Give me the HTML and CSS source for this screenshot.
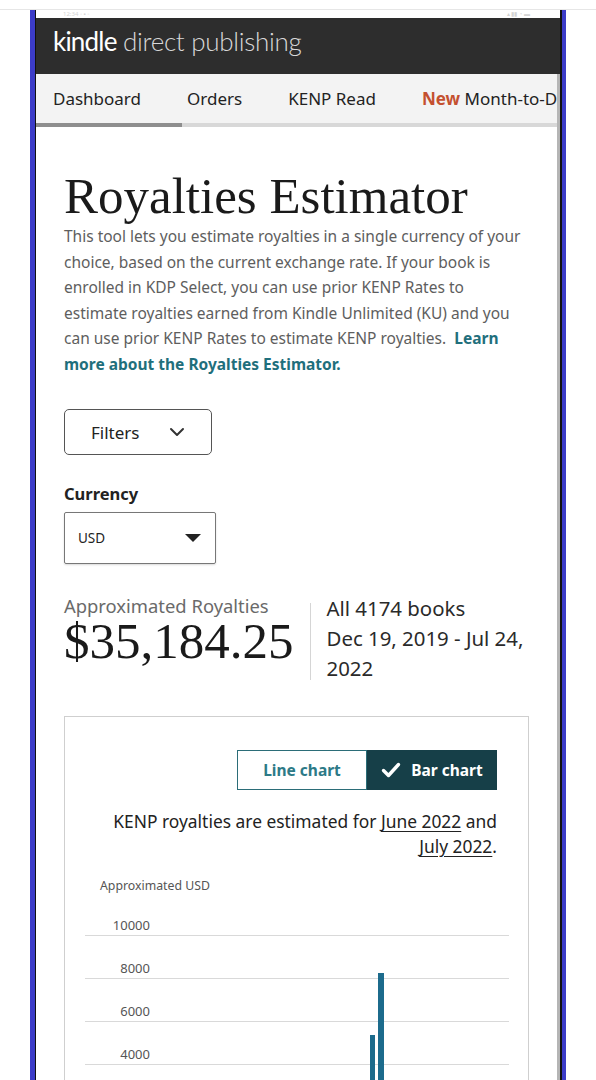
FILE: index.html
```html
<!DOCTYPE html>
<html lang="en">
<head>
<meta charset="utf-8">
<title>Royalties Estimator</title>
<link rel="stylesheet" href="styles.css">
</head>
<body>
<div class="topline"></div>
<div class="phone">
  <div class="screen">
    <div class="status"><span class="st-left">12:34 ◦ ▪ ◦</span><span class="st-right">▴ ▮▮ ◔ ▬</span></div>
    <header class="kdp-header"><span class="k-bold">kindle</span> <span class="k-light">direct publishing</span></header>
    <nav class="kdp-nav">
      <div class="nav-items">
        <span>Dashboard</span>
        <span>Orders</span>
        <span>KENP Read</span>
        <span><b class="new">New</b> Month-to-Date</span>
      </div>
      <div class="nav-track"><div class="nav-thumb"></div></div>
    </nav>
    <main class="content">
      <h1 class="title">Royalties Estimator</h1>
      <p class="intro">This tool lets you estimate royalties in a single currency of your<br>choice, based on the current exchange rate. If your book is<br>enrolled in KDP Select, you can use prior KENP Rates to<br>estimate royalties earned from Kindle Unlimited (KU) and you<br>can use prior KENP Rates to estimate KENP royalties. &nbsp;<a class="learn" href="#">Learn<br>more about the Royalties Estimator.</a></p>

      <button class="filters">Filters
        <svg class="chev" width="16" height="10" viewBox="0 0 16 10"><path d="M2 2 L8 8 L14 2" fill="none" stroke="#333" stroke-width="2" stroke-linecap="round" stroke-linejoin="round"/></svg>
      </button>

      <div class="field-label">Currency</div>
      <div class="select">USD
        <svg class="tri" width="16" height="8" viewBox="0 0 16 8"><path d="M0 0 H16 L8 8 Z" fill="#222"/></svg>
      </div>

      <div class="summary">
        <div class="sum-left">
          <div class="sum-label">Approximated Royalties</div>
          <div class="sum-value">$35,184.25</div>
        </div>
        <div class="divider"></div>
        <div class="sum-right">
          <div>All 4174 books</div>
          <div>Dec 19, 2019 - Jul 24,<br>2022</div>
        </div>
      </div>

      <section class="card">
        <div class="toggle">
          <span class="tg tg-off">Line chart</span>
          <span class="tg tg-on"><svg width="20" height="16" viewBox="0 0 20 16"><path d="M2.5 8.5 L7.5 13.5 L17.5 2.5" fill="none" stroke="#fff" stroke-width="3.4" stroke-linecap="round" stroke-linejoin="round"/></svg>Bar chart</span>
        </div>
        <p class="note">KENP royalties are estimated for <u>June 2022</u> and<br><u>July 2022</u>.</p>
        <div class="axis-title">Approximated USD</div>
        <div class="chart">
          <div class="row"><span class="ylab">10000</span></div>
          <div class="row"><span class="ylab">8000</span></div>
          <div class="row"><span class="ylab">6000</span></div>
          <div class="row"><span class="ylab">4000</span></div>
          <div class="row"><span class="ylab">2000</span></div>
          <div class="bar" style="left:285px; top:142px; width:5px; height:120px"></div>
          <div class="bar" style="left:293px; top:80px; width:6px; height:182px"></div>
        </div>
      </section>
    </main>
  </div>
</div>
</body>
</html>
```
FILE: styles.css
```css
* { box-sizing: border-box; }
html, body { margin: 0; padding: 0; background: #fff; }
body {
  height: 1080px;
  overflow: hidden;
  font-family: "Noto Sans", "Open Sans", sans-serif;
  color: #222;
}
.topline { height: 10px; border-bottom: 1px solid #e6e6e6; }
.phone {
  margin-left: 30px;
  width: 536px;
  height: 1070px;
  border-left: 5px solid #3c3cc8;
  border-right: 4px solid #3c3cc8;
  overflow: hidden;
}
.screen {
  height: 100%;
  border-left: 1px solid #111;
  border-right: 2px solid #111;
  display: flex;
  flex-direction: column;
}
.status {
  flex: none;
  height: 8px;
  display: flex;
  justify-content: space-between;
  padding: 0 30px 0 27px;
  font-size: 6px;
  line-height: 8px;
  color: #d4d4d4;
}
.kdp-header {
  flex: none;
  height: 56px;
  background: #2d2d2d;
  color: #f2f2f2;
  padding-left: 17px;
  font-family: "Lato", "Noto Sans", sans-serif;
  font-size: 26px;
  line-height: 47px;
  letter-spacing: -0.3px;
  white-space: nowrap;
}
.k-bold { font-weight: 400; color: #fff; letter-spacing: -0.8px; }
.k-light { font-weight: 300; color: #d8d8d8; }
.kdp-nav {
  flex: none;
  background: #f3f3f3;
  border-right: 3px solid #b5b5b5;
}
.nav-items {
  height: 49px;
  display: flex;
  align-items: center;
  gap: 46px;
  padding-left: 17px;
  white-space: nowrap;
  font-size: 17px;
  color: #222;
  overflow: hidden;
}
.new { color: #c4502f; font-weight: 700; }
.nav-track { height: 4px; background: #d8d8d8; }
.nav-thumb { width: 146px; height: 4px; background: #8e8e8e; }
.content {
  flex: 1;
  padding: 0 28px;
  border-right: 3px solid #b5b5b5;
  background: #fff;
}
.title {
  margin: 41px 0 0;
  font-family: "Liberation Serif", serif;
  font-weight: 400;
  font-size: 51px;
  line-height: 56px;
  color: #1a1a1a;
}
.intro {
  margin: 0;
  font-size: 15.5px;
  line-height: 25.5px;
  color: #5e5e5e;
  white-space: nowrap;
}
.learn { color: #1f6f7c; font-weight: 700; text-decoration: none; }
.filters {
  display: flex;
  align-items: center;
  gap: 30px;
  margin-top: 32px;
  width: 148px;
  height: 46px;
  padding: 0 0 0 26px;
  border: 1px solid #555;
  border-radius: 5px;
  background: #fff;
  font-family: inherit;
  font-size: 17px;
  color: #222;
}
.field-label {
  margin-top: 27px;
  font-weight: 700;
  font-size: 16.5px;
  line-height: 24px;
}
.select {
  margin-top: 6px;
  width: 152px;
  height: 52px;
  border: 1px solid #777;
  border-radius: 2px;
  box-shadow: 0 1px 2px rgba(0,0,0,0.15);
  display: flex;
  align-items: center;
  justify-content: space-between;
  padding: 0 14px 0 13px;
  font-size: 13.5px;
  color: #222;
}
.summary {
  margin-top: 29px;
  display: flex;
  align-items: flex-start;
}
.sum-left { padding-right: 16px; }
.sum-label { font-size: 18.4px; color: #6a6a6a; line-height: 20px; margin-top: 3px; }
.sum-value {
  font-family: "Liberation Serif", serif;
  font-size: 51px;
  line-height: 50px;
  color: #1a1a1a;
}
.divider {
  align-self: stretch;
  width: 1px;
  background: #d5d5d5;
  margin: 10px 0 3px;
}
.sum-right {
  padding-left: 16px;
  font-size: 20.4px;
  line-height: 30px;
  color: #2a2a2a;
  white-space: nowrap;
}
.card {
  margin-top: 33px;
  border: 1px solid #cfcfcf;
  padding: 33px 31px 0 20px;
  height: 400px;
}
.toggle {
  display: flex;
  justify-content: flex-end;
}
.tg {
  width: 130px;
  height: 40px;
  display: flex;
  align-items: center;
  justify-content: center;
  font-weight: 700;
  font-size: 15.5px;
}
.tg-off { border: 1px solid #2b6d78; color: #2d7a87; background: #fff; }
.tg-on { background: #163f48; color: #fff; gap: 10px; border: 1px solid #163f48; }
.note {
  margin: 19px 0 0;
  text-align: right;
  font-size: 17.4px;
  line-height: 25px;
  color: #222;
  white-space: nowrap;
}
.note u { text-underline-offset: 3px; text-decoration-thickness: 1px; }
.axis-title {
  margin-top: 18px;
  padding-left: 15px;
  font-size: 12.3px;
  line-height: 17px;
  color: #555;
}
.chart {
  position: relative;
  margin-top: -1px;
}
.row {
  height: 43px;
  border-bottom: 1px solid #d9d9d9;
  display: flex;
  align-items: flex-end;
  padding-bottom: 2px;
  margin-right: -12px;
}
.ylab {
  width: 65px;
  text-align: right;
  font-size: 13px;
  color: #555;
  line-height: 16px;
}
.bar { position: absolute; background: #1c6b8c; }
```
